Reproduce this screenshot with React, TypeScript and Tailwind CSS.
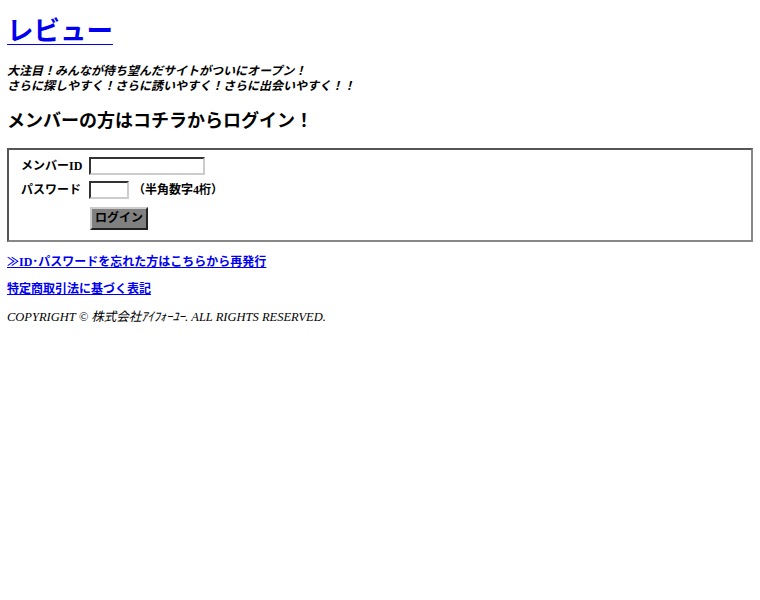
import React from 'react';

const jp = 'font-["Liberation_Serif","Noto_Sans_CJK_JP",serif]';

export default function App() {
  return (
    <div className={`min-h-[600px] bg-white px-[7px] pt-[14px] text-black ${jp}`}>
      <h1 className="text-[26.5px] font-bold leading-[34px]">
        <a href="#" className="text-[#0000ee] underline underline-offset-[4px] decoration-1">
          レビュー
        </a>
      </h1>

      <p className="mt-[16px] text-[12px] font-bold italic leading-[15px]">
        大注目！みんなが待ち望んだサイトがついにオープン！
        <br />
        さらに探しやすく！さらに誘いやすく！さらに出会いやすく！！
      </p>

      <h2 className="mt-[14px] text-[18px] font-bold leading-[26px]">
        メンバーの方はコチラからログイン！
      </h2>

      <div className="mt-[14px] border-2 border-t-[#555] border-l-[#555] border-b-[#888] border-r-[#888] px-[12px] pt-[7px] pb-[10px]">
        <div className="flex items-center gap-[2px] text-[12px] font-bold">
          <span className="w-[66px]">メンバーID</span>
          <input className="h-[18px] w-[116px] border-2 border-t-[#333] border-l-[#333] border-b-[#ccc] border-r-[#ccc] bg-white" />
        </div>
        <div className="mt-[6px] flex items-center gap-[2px] text-[12px] font-bold">
          <span className="w-[66px]">パスワード</span>
          <input className="h-[18px] w-[40px] border-2 border-t-[#333] border-l-[#333] border-b-[#ccc] border-r-[#ccc] bg-white" />
          <span className="ml-[2px]">（半角数字4桁）</span>
        </div>
        <div className="mt-[6px] pl-[69px]">
          <button className="h-[23px] w-[58px] border-2 border-t-[#ccc] border-l-[#ccc] border-b-[#222] border-r-[#222] bg-[#808080] text-[12px] font-bold leading-none">
            ログイン
          </button>
        </div>
      </div>

      <p className="mt-[12px] text-[12px] font-bold leading-[16px]">
        <a href="#" className="text-[#0000ee] underline">
          ≫ID･パスワードを忘れた方はこちらから再発行
        </a>
      </p>
      <p className="mt-[11px] text-[12px] font-bold leading-[16px]">
        <a href="#" className="text-[#0000ee] underline">
          特定商取引法に基づく表記
        </a>
      </p>
      <p className="mt-[12px] text-[12.5px] italic leading-[16px]">
        COPYRIGHT © 株式会社ｱｲﾌｫｰﾕｰ. ALL RIGHTS RESERVED.
      </p>
    </div>
  );
}
